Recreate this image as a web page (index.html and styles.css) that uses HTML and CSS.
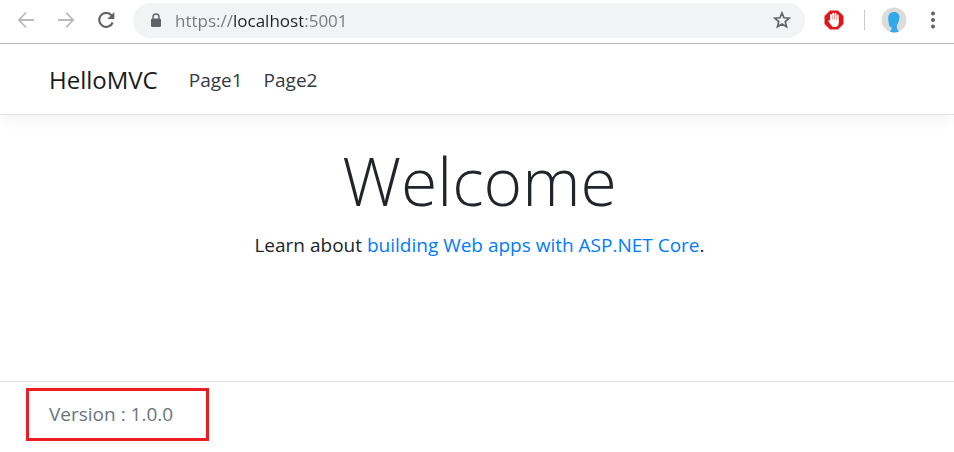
FILE: index.html
```html
<!DOCTYPE html>
<html lang="en">
<head>
<meta charset="utf-8">
<meta name="viewport" content="width=device-width, initial-scale=1">
<title>Home Page - HelloMVC</title>
<link rel="stylesheet" href="styles.css">
</head>
<body>
<div class="toolbar">
  <button class="tool tool-muted" type="button" aria-label="Back">
    <svg width="18" height="18" viewBox="0 0 18 18" fill="none" stroke="currentColor" stroke-width="1.8"><path d="M17 9H2M9 1.500L1.800 9L9 16.500"/></svg>
  </button>
  <button class="tool tool-muted" type="button" aria-label="Forward">
    <svg width="18" height="18" viewBox="0 0 18 18" fill="none" stroke="currentColor" stroke-width="1.8"><path d="M1 9H16M9 1.500L16.200 9L9 16.500"/></svg>
  </button>
  <button class="tool" type="button" aria-label="Reload">
    <svg width="18" height="18" viewBox="0 0 18 18"><path d="M14.500 4.300A7 7 0 1 0 15.700 11.500" fill="none" stroke="currentColor" stroke-width="2.100"/><path d="M17.300 1V8H10.300Z" fill="currentColor"/></svg>
  </button>
  <div class="omnibox">
    <svg class="lock" width="12" height="15" viewBox="0 0 12 15" aria-hidden="true"><path d="M3 6V4A3 3 0 0 1 9 4V6" fill="none" stroke="currentColor" stroke-width="1.400"/><rect x="1" y="5.500" width="10" height="8.500" rx="1.200" fill="currentColor"/></svg>
    <input class="address" type="text" aria-label="Address" value="https://localhost:5001" spellcheck="false">
    <button class="tool" type="button" aria-label="Bookmark this page">
      <svg width="18" height="18" viewBox="0 0 18 18" fill="none" stroke="currentColor" stroke-width="1.700"><path d="M9 2L11 6.800L16.300 7.200L12.300 10.600L13.500 15.700L9 13L4.500 15.700L5.700 10.600L1.700 7.200L7 6.800Z"/></svg>
    </button>
  </div>
  <button class="tool blocker" type="button" aria-label="Ad blocker">
    <svg width="20" height="20" viewBox="0 0 20 20"><path d="M6 0.500H14L19.500 6V14L14 19.500H6L0.500 14V6Z" fill="#e0161b" stroke="#ee8d8d" stroke-width=".6"/><g stroke="#fff" stroke-width="1.900" stroke-linecap="round" fill="none"><path d="M7 5V11M9.200 3.600V11M11.500 3.800V11M13.700 5.500V12"/></g><path d="M6 9.500H14.700V13C14.700 15.500 13.300 17 11 17C8.600 17 7.800 16 6.600 14.400L4.500 11.500C4 10.600 5 10 5.800 10.600L6.500 11.200Z" fill="#fff"/><path d="M8.100 6V10M10.350 5V10M12.600 6V10" stroke="#e99a9a" stroke-width=".5"/></svg>
  </button>
  <span class="divider"></span>
  <button class="tool profile" type="button" aria-label="Profile">
    <svg width="26" height="26" viewBox="0 0 26 26"><circle cx="13" cy="13" r="12.500" fill="#dcdcdc"/><path d="M12.500 5C16.500 4.500 18.700 7.500 18.400 11C18.200 15 16 17 15.800 19.500C15.700 22 16.800 23 18 24.400Q13 26.400 8.500 24.400C10 23.500 10.800 22.500 10.500 20.300C8.600 20.200 8 18.500 7.800 16.500C7.500 14 7 12 7.200 10.500C7.400 7.300 9.500 5.200 12.500 5Z" fill="#33aae8"/></svg>
  </button>
  <button class="tool menu" type="button" aria-label="Menu">
    <svg width="4" height="18" viewBox="0 0 4 18" fill="currentColor"><circle cx="2" cy="2.500" r="2"/><circle cx="2" cy="9" r="2"/><circle cx="2" cy="15.500" r="2"/></svg>
  </button>
</div>

<header class="site-header">
  <nav class="nav">
    <a class="brand" href="#">HelloMVC</a>
    <a class="nav-link" href="#">Page1</a>
    <a class="nav-link" href="#">Page2</a>
  </nav>
</header>

<main class="main">
  <h1 class="title">Welcome</h1>
  <p class="lead">Learn about <a href="#">building Web apps with ASP.NET Core</a>.</p>
</main>

<footer class="footer">
  <p class="version">Version : 1.0.0</p>
</footer>
</body>
</html>
```

FILE: styles.css
```css
* { box-sizing: border-box; }

body {
  margin: 0;
  min-height: 100vh;
  display: flex;
  flex-direction: column;
  background: #fff;
  color: #212529;
  font-family: "Open Sans", "Noto Sans", sans-serif;
  font-size: 19px;
  line-height: 30px;
}

a { color: #007bff; text-decoration: none; }

.toolbar {
  display: flex;
  align-items: center;
  height: 44px;
  padding: 0 16px 3px 17px;
  border-bottom: 1px solid #b4b5b6;
}

.tool {
  display: flex;
  flex: none;
  margin: 0 22px 0 0;
  padding: 0;
  border: 0;
  background: none;
  color: #5f6368;
}

.tool-muted { color: #bababa; }

.omnibox {
  display: flex;
  flex: 1;
  align-items: center;
  min-width: 0;
  height: 35px;
  margin-right: 19px;
  margin-left: -4px;
  padding-left: 17px;
  border-radius: 18px;
  background: #f1f3f4;
}

.omnibox .tool { margin-right: 14px; }

.lock { flex: none; color: #5f6368; }

.address {
  flex: 1;
  min-width: 0;
  height: 30px;
  margin-left: 13px;
  padding: 0;
  border: 0;
  outline: 0;
  background: linear-gradient(90deg, #75797d 58px, #202124 58px, #202124 128px, #75797d 128px);
  -webkit-background-clip: text;
  background-clip: text;
  color: transparent;
  font: 17px "Open Sans", "Noto Sans", sans-serif;
}

.blocker { margin-right: 20px; }

.divider {
  width: 1px;
  height: 20px;
  margin-right: 16px;
  background: #c8cacc;
}

.profile { margin-right: 24px; }

.menu { margin-right: 3px; }

.site-header {
  padding: 18px 49px 16px;
  border-bottom: 1px solid #dee2e6;
  box-shadow: 0 5px 15px rgba(0, 0, 0, .05);
}

.nav { display: flex; align-items: center; }

.brand {
  margin-right: 31px;
  color: #1a1a1a;
  font-size: 24px;
  line-height: 36px;
}

.nav-link { margin-right: 21px; color: #343a40; }

.main {
  flex: 1;
  padding: 24px 20px 0 25px;
  text-align: center;
}

.title {
  margin: 0 0 9px;
  font-size: 66px;
  font-weight: 300;
  line-height: 82px;
}

.lead { margin: 0; }

.footer {
  padding: 6px 26px 11px;
  border-top: 1px solid #dee2e6;
  color: #6c757d;
}

.version {
  width: fit-content;
  margin: 0;
  padding: 8px 33px 9px 20px;
  border: 3px solid #ed1c24;
}
```
